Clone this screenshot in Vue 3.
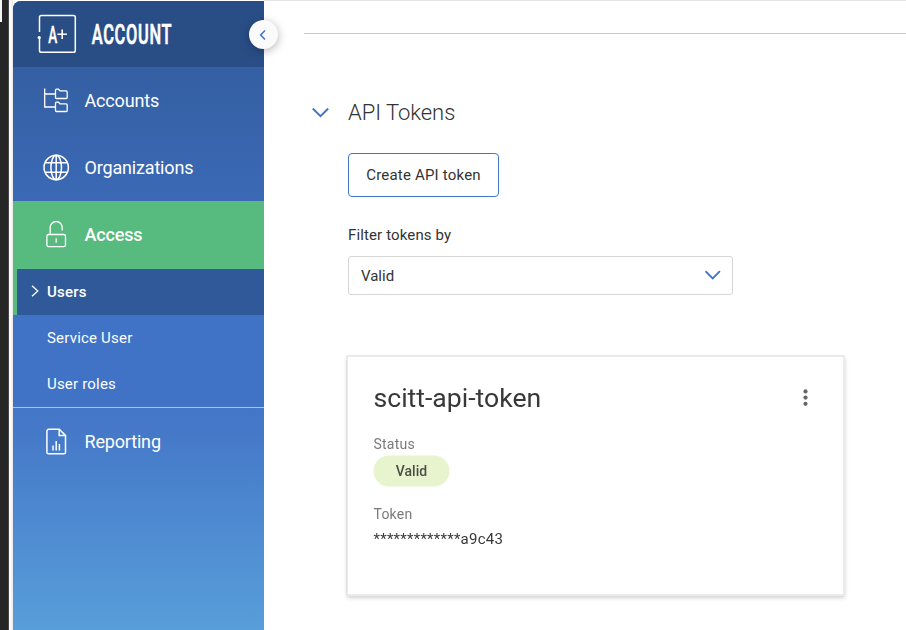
<script setup>
const subItems = [
  { label: 'Users', active: true },
  { label: 'Service User', active: false },
  { label: 'User roles', active: false },
]
</script>

<template>
  <div class="page">
    <div class="edge"><div class="edge-tab"></div></div>
    <div class="gutter"></div>
    <aside class="sidebar">
      <header class="brand">
        <svg width="210" height="44" viewBox="0 0 210 44">
          <path d="M3.5 20V5.200a1.800 1.800 0 0 1 1.800-1.800H37.500a1.800 1.800 0 0 1 1.800 1.800V38.500a1.800 1.800 0 0 1-1.800 1.800H5.300a1.800 1.800 0 0 1-1.800-1.800V25.500" fill="none" stroke="#fff" stroke-width="1.500" />
          <circle cx="3.200" cy="25.500" r="1.600" fill="#fff" />
          <text x="12.200" y="31" class="logo-text" textLength="9" lengthAdjust="spacingAndGlyphs">A</text>
          <path d="M21.400 22.300H30.900M26.200 17.600v9.400" stroke="#fff" stroke-width="1.600" />
          <text x="55.700" y="32" class="brand-text" textLength="80.500" lengthAdjust="spacingAndGlyphs">ACCOUNT</text>
        </svg>
      </header>
      <nav>
        <a class="item">
          <svg class="icon" viewBox="0 0 28 28">
            <path d="M2.700 1.500v18.500H13.500M2.700 7H13.500M13.500 3.200q0-1 1-1H16.500l1.500 1.700H24q1.200 0 1.200 1V10.500q0 1-1 1H14.500q-1 0-1-1zM13.500 16.200q0-1 1-1H16.500l1.500 1.700H24q1.200 0 1.200 1V23.500q0 1-1 1H14.500q-1 0-1-1z" />
          </svg>
          <span>Accounts</span>
        </a>
        <a class="item">
          <svg class="icon globe" viewBox="0 0 28 28">
            <circle cx="14.200" cy="13.500" r="12.200" />
            <ellipse cx="14.200" cy="13.500" rx="5.300" ry="12.200" />
            <path d="M14.200 1.300v24.400M3.200 8.800h22M3.200 18.200h22" />
          </svg>
          <span>Organizations</span>
        </a>
        <a class="item current">
          <svg class="icon" viewBox="0 0 28 28">
            <rect x="4.900" y="14.500" width="18.600" height="12.200" rx="1.800" />
            <path d="M8.200 14.500V7.500a6 6 0 0 1 12 0V10.500M14.200 18.300v4.500" />
          </svg>
          <span>Access</span>
        </a>
        <div class="submenu">
          <a v-for="s in subItems" :key="s.label" class="sub" :class="{ selected: s.active }">
            <svg v-if="s.active" class="caret" viewBox="0 0 8 12"><path d="M1 .8 6.800 6 1 11.200" /></svg>
            <span>{{ s.label }}</span>
          </a>
        </div>
        <a class="item">
          <svg class="icon report" viewBox="0 0 28 28">
            <path d="M6.900 1.200H17.200l6.300 6.200V24.200a1.600 1.600 0 0 1-1.600 1.600H6.500a1.600 1.600 0 0 1-1.600-1.600V3.200a2 2 0 0 1 2-2zM17.200 1.400v6.100h6.200M11 17.500v5M14.200 13V22.500M17.400 16V22.500" />
          </svg>
          <span>Reporting</span>
        </a>
      </nav>
      <button class="collapse" aria-label="Collapse">
        <svg width="8" height="12" viewBox="0 0 8 12"><path d="M6 1.500 1.700 6 6 10.500" /></svg>
      </button>
    </aside>
    <main class="content">
      <div class="rule"></div>
      <h2 class="heading">
        <svg width="18" height="11" viewBox="0 0 18 11"><path d="M.8 1.500 8.500 9.200l7.700-7.700" /></svg>
        <span>API Tokens</span>
      </h2>
      <section class="body">
        <button class="create"><span>Create API token</span></button>
        <div class="label">Filter tokens by</div>
        <div class="select">
          <span>Valid</span>
          <svg width="16" height="10" viewBox="0 0 16 10"><path d="M.5 1.200 7.700 8.400l7.200-7.200" /></svg>
        </div>
        <article class="card">
          <div class="card-head">
            <h3>scitt-api-token</h3>
            <svg width="6" height="18" viewBox="0 0 6 18"><circle cx="3" cy="2.900" r="2.100" /><circle cx="3" cy="9.100" r="2.100" /><circle cx="3" cy="15.300" r="2.100" /></svg>
          </div>
          <div class="key">Status</div>
          <div class="pill">Valid</div>
          <div class="key token">Token</div>
          <div class="value">*************a9c43</div>
        </article>
      </section>
    </main>
  </div>
</template>

<style>
body {
  margin: 0;
  background: #fff;
}
</style>

<style scoped>
.page {
  display: flex;
  width: 906px;
  height: 630px;
  overflow: hidden;
  font-family: Roboto, "Liberation Sans", sans-serif;
  color: #333;
  background: #fff;
}
.edge {
  flex: none;
  width: 8px;
  background: #262626;
  border-right: 1px solid #484848;
}
.edge-tab {
  width: 2px;
  height: 22px;
  background: #f4f4f4;
}
.gutter {
  flex: none;
  width: 4px;
  background: linear-gradient(90deg, #fafafa 50%, #e6e7e8);
}
.sidebar {
  position: relative;
  flex: none;
  width: 251px;
  height: 629px;
  margin-top: 1px;
  border-radius: 8px 0 0 0;
  background: linear-gradient(180deg, #345fa3 66px, #3b69b5 200px, #4073c6 380px, #4579c8 430px, #589eda 629px);
}
.brand {
  box-sizing: border-box;
  height: 66px;
  padding: 11px 0 0 23px;
  border-radius: 8px 0 0 0;
  background: #294e86;
}
.brand svg {
  display: block;
}
.logo-text,
.brand-text {
  fill: #fff;
  stroke: #fff;
  font-weight: 500;
}
.logo-text {
  font-size: 23px;
  stroke-width: 0.4;
}
.brand-text {
  font-size: 28px;
  stroke-width: 0.7;
  letter-spacing: 1.2px;
}
.item {
  display: flex;
  align-items: center;
  gap: 14.5px;
  box-sizing: border-box;
  height: 67px;
  padding-left: 29px;
  color: #fff;
  font-size: 18px;
  letter-spacing: -0.17px;
}
.icon {
  flex: none;
  width: 28px;
  height: 28px;
  fill: none;
  stroke: #fff;
  stroke-width: 1.3;
}
.globe,
.report {
  stroke-width: 1.5;
}
.item.current {
  height: 68px;
  padding-bottom: 2px;
  background: #57ba7e;
  font-weight: 500;
}
.submenu {
  background: #4073c6;
  border-bottom: 1px solid #a9c4eb;
}
.sub {
  display: flex;
  align-items: center;
  box-sizing: border-box;
  height: 46px;
  padding-left: 34px;
  color: #fff;
  font-size: 15px;
  letter-spacing: 0.2px;
}
.sub.selected {
  padding-left: 14px;
  border-left: 4px solid #57ba7e;
  background: #30599a;
  font-weight: 500;
}
.caret {
  width: 8px;
  height: 12px;
  margin: -2px 8px 0 0;
  fill: none;
  stroke: #fff;
  stroke-width: 1.3;
}
.collapse {
  position: absolute;
  top: 19px;
  right: -14px;
  display: flex;
  align-items: center;
  justify-content: center;
  width: 29px;
  height: 29px;
  padding: 0 1px 0 0;
  border: 0;
  border-radius: 50%;
  background: #fafafa;
  box-shadow: 0 2px 10px rgba(0, 0, 0, 0.3);
}
.collapse path,
.heading path,
.select path {
  fill: none;
  stroke: #4276cb;
  stroke-width: 1.9;
}
.collapse path {
  stroke-width: 1.6;
}
.content {
  flex: 1;
  border-top: 1px solid #e4e4e4;
  background: #fff;
}
.rule {
  height: 1px;
  margin: 32px 0 0 40px;
  background: #c8c8c8;
}
.heading {
  display: flex;
  align-items: center;
  gap: 18px;
  height: 30px;
  margin: 63px 0 0 48px;
  font-size: 22px;
  font-weight: 300;
  letter-spacing: -0.04px;
}
.body {
  width: 498px;
  margin: 26px 0 0 83px;
}
.create {
  display: block;
  width: 151px;
  height: 44px;
  margin-left: 1px;
  padding: 0;
  border: 1px solid #4276cb;
  border-radius: 4px;
  background: #fff;
  color: #333;
  font: 400 15px Roboto, sans-serif;
  letter-spacing: 0.19px;
}
.label {
  margin: 28px 0 0 1px;
  font-size: 15px;
  line-height: 20px;
  letter-spacing: 0.13px;
}
.select {
  display: flex;
  align-items: center;
  justify-content: space-between;
  box-sizing: border-box;
  width: 385px;
  height: 39px;
  margin: 11px 0 0 1px;
  padding: 0 11px 0 12px;
  border: 1px solid #d6d6d6;
  border-radius: 3px;
  font-size: 15px;
}
.select svg {
  margin-top: -2px;
}
.card {
  box-sizing: border-box;
  width: 498px;
  height: 240px;
  margin-top: 61px;
  padding: 25px 26px 0 26px;
  border: 1px solid #d8d8d8;
  box-shadow: 0 2px 4px rgba(0, 0, 0, 0.18);
  will-change: transform;
  transform: translate(-0.5px, -0.5px);
}
.card-head {
  display: flex;
  align-items: center;
  justify-content: space-between;
  height: 32px;
  padding-right: 9px;
}
.card-head h3 {
  margin: 0;
  font-size: 26.6px;
  font-weight: 400;
  line-height: 32px;
  color: #383838;
}
.card-head svg {
  fill: #666;
}
.key {
  margin-top: 20px;
  color: #7a7a7a;
  font-size: 14px;
  line-height: 20px;
  letter-spacing: 0.22px;
}
.pill {
  width: 76px;
  height: 31px;
  margin-top: 2px;
  border-radius: 16px;
  background: #e8f4cd;
  color: #4b4d47;
  font-size: 14px;
  font-weight: 500;
  line-height: 31px;
  text-align: center;
}
.key.token {
  margin-top: 17px;
}
.value {
  margin-top: 5px;
  color: #383838;
  font-size: 15px;
  line-height: 20px;
  letter-spacing: 0.24px;
}
</style>
